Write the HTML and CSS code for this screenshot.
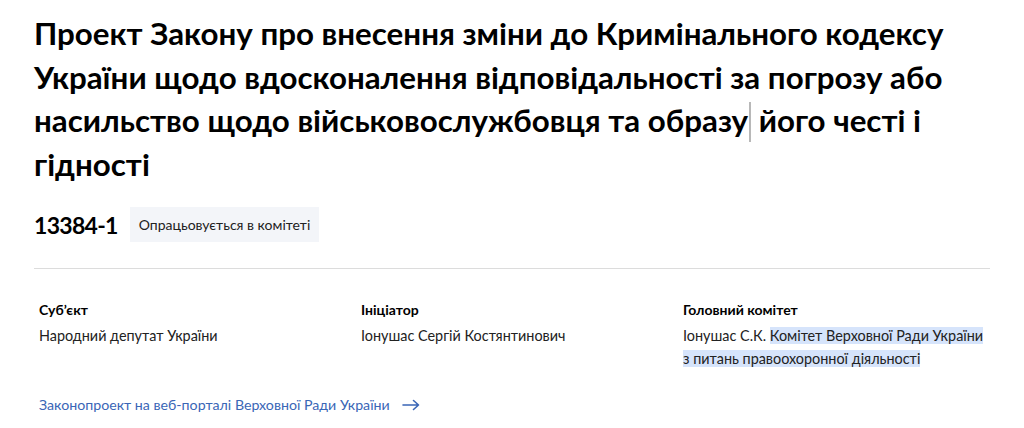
FILE: index.html
```html
<!DOCTYPE html>
<html lang="uk">
<head>
<meta charset="utf-8">
<link rel="stylesheet" href="styles.css">
</head>
<body>
<main class="page">
  <h1 class="title">Проект Закону про внесення зміни до Кримінального кодексу України щодо вдосконалення відповідальності за погрозу або насильство щодо військовослужбовця та образу<span class="caret"></span> його честі і гідності</h1>
  <div class="meta">
    <span class="number">13384-1</span>
    <span class="badge">Опрацьовується в комітеті</span>
  </div>
  <hr class="divider">
  <div class="info">
    <div class="col">
      <div class="label">Суб’єкт</div>
      <div class="value">Народний депутат України</div>
    </div>
    <div class="col">
      <div class="label">Ініціатор</div>
      <div class="value">Іонушас Сергій Костянтинович</div>
    </div>
    <div class="col">
      <div class="label">Головний комітет</div>
      <div class="value">Іонушас С.К. <span class="sel">Комітет Верховної Ради України з питань правоохоронної діяльності</span></div>
    </div>
  </div>
  <a class="link" href="#"><span class="link-text">Законопроект на веб-порталі Верховної Ради України</span>
    <svg class="arrow" width="18" height="12" viewBox="0 0 18 12" fill="none" stroke="currentColor" stroke-width="1.6" stroke-linecap="round" stroke-linejoin="round"><path d="M1 6h15.5M11.5 1.5L16.5 6l-5 4.5"/></svg>
  </a>
</main>
</body>
</html>
```

FILE: styles.css
```css
* { box-sizing: border-box; }
html, body { margin: 0; padding: 0; background: #fff; }
body {
  font-family: Lato, "Noto Sans", sans-serif;
  color: #000;
}
.page {
  padding: 12px 34px 0 34px;
  width: 1024px;
}
.title {
  margin: 0;
  font-size: 31.3px;
  line-height: 43.5px;
  font-weight: 700;
  max-width: 930px;
}
.caret {
  display: inline-block;
  width: 2px;
  height: 40px;
  background: #b8b8b8;
  vertical-align: -10px;
  margin-left: 1px;
}
.meta {
  display: flex;
  align-items: center;
  gap: 12px;
  margin-top: 21px;
}
.number {
  font-size: 23px;
  font-weight: 700;
  letter-spacing: -0.7px;
}
.badge {
  display: flex;
  align-items: center;
  height: 35px;
  background: #f3f5f9;
  font-size: 14px;
  padding: 0 9px;
  color: #222;
}
.divider {
  border: 0;
  border-top: 1px solid #dcdcdc;
  margin: 26px 0 0 0;
  width: 956px;
}
.info {
  display: grid;
  grid-template-columns: 322px 322px 305px;
  padding: 31px 0 0 5px;
}
.label {
  font-size: 14px;
  font-weight: 700;
  line-height: 20px;
}
.value {
  font-size: 14.4px;
  line-height: 23px;
  margin-top: 4px;
  color: #222;
}
.sel { background: #d6e4fb; }
.link {
  display: inline-flex;
  align-items: center;
  gap: 12px;
  margin: 26px 0 0 5px;
  color: #3a66b6;
  text-decoration: none;
  font-size: 14.2px;
}
.link-text { text-decoration: underline; text-underline-offset: 3px; }
.arrow { display: block; }
```
